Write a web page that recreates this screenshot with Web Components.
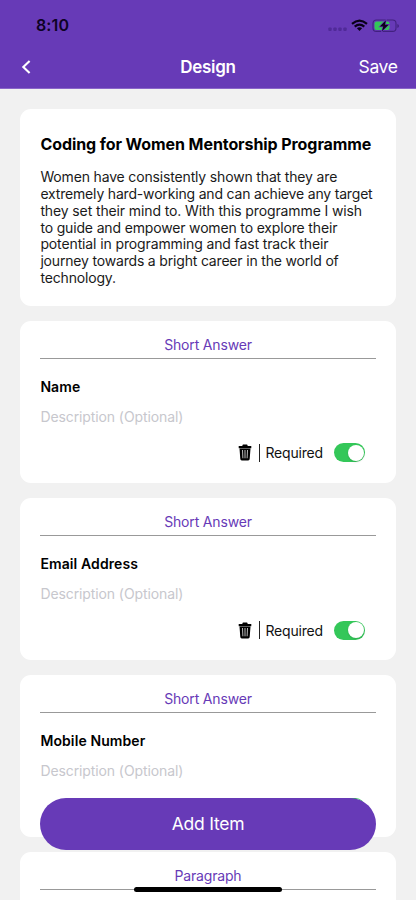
<!DOCTYPE html>
<html lang="en">
<head>
<meta charset="utf-8">
<title>Design</title>
<style>
  html, body { margin: 0; height: 900px; overflow: hidden; }
  body { background: #f1f1f1; font-family: Inter, "Liberation Sans", sans-serif; color: #000; }
</style>
</head>
<body>
<form-designer></form-designer>
<script>
const define = (name, html) => customElements.define(name, class extends HTMLElement {
  constructor() {
    super();
    this.attachShadow({ mode: 'open' }).innerHTML = html;
  }
});

define('status-bar', `
  <style>
    :host { display: flex; height: 44px; padding: 3px 17.5px 0 36px; box-sizing: border-box;
      align-items: center; justify-content: space-between; color: #0d0224; }
    .time { font-size: 16px; line-height: 20px; font-weight: 600; margin-top: 2px; letter-spacing: .1px; }
    svg { display: block; margin-top: 4px; }
  </style>
  <span class="time">8:10</span>
  <svg width="71" height="14" viewBox="0 0 71 14">
    <g fill="#502a98"><rect x="0.3" y="8.4" width="3.4" height="3.6" rx="1"/><rect x="5.3" y="8.4" width="3.4" height="3.6" rx="1"/><rect x="10.3" y="8.4" width="3.4" height="3.6" rx="1"/><rect x="15.3" y="8.4" width="3.4" height="3.6" rx="1"/></g>
    <g fill="none" stroke="#090118" stroke-width="2.2"><path d="M24 4.9Q31.5 -1.6 39 4.9"/><path d="M26.7 7.7Q31.5 3.7 36.3 7.7"/></g>
    <path d="M28.9 9.3Q31.5 7.3 34.1 9.3L31.5 12Z" fill="#090118"/>
    <rect x="45" y="1" width="23" height="11.4" rx="3.4" fill="none" stroke="#42217f" stroke-width="1.1"/>
    <path d="M69.4 5v4q1.5-.5 1.5-2t-1.5-2z" fill="#42217f"/>
    <rect x="46.5" y="2.4" width="15" height="8.6" rx="2" fill="#34c759"/>
    <path d="M57.9 1.2L51.8 7.5h3.5l-1.4 4.8L60.6 5.7H57z" fill="#090118" stroke="#673ab7" stroke-width="1.3" paint-order="stroke"/>
  </svg>`);

define('nav-bar', `
  <style>
    :host { display: grid; grid-template-columns: 1fr auto 1fr; align-items: center; height: 44px;
      padding: 1px 18.5px 0 20px; box-sizing: border-box; color: #fff; font-size: 17px; line-height: 22px; }
    .title { font-weight: 600; letter-spacing: -.3px; margin: 0 1.5px 0 0; }
    .action { justify-self: end; font-size: 17.5px; letter-spacing: -.4px; }
    svg { display: block; }
  </style>
  <svg width="13" height="16" viewBox="0 0 13 16"><path d="M9.6 1.9L3.3 8l6.3 6.1" fill="none" stroke="#fff" stroke-width="2.1"/></svg>
  <span class="title"><slot></slot></span>
  <span class="action"><slot name="action"></slot></span>`);

define('form-card', `
  <style>
    :host { display: block; box-sizing: border-box; background: #fff; border-radius: 11px; padding: 0 20px; flex: none; }
  </style>
  <slot></slot>`);

define('intro-text', `
  <style>
    :host { display: block; padding: 25px 0 19px; }
    h1 { margin: 0 0 15px; font-size: 16px; line-height: 20px; font-weight: 700; white-space: nowrap; letter-spacing: -.08px; }
    p { margin: 0; font-size: 14px; line-height: 16.85px; color: #1a1a1a; white-space: nowrap; letter-spacing: -.16px; }
    ::slotted(.open) { letter-spacing: -.12px; }
    ::slotted(.tight) { letter-spacing: -.18px; }
  </style>
  <h1><slot name="title"></slot></h1>
  <p><slot></slot></p>`);

define('trash-icon', `
  <style>:host, svg { display: block; }</style>
  <svg width="14" height="17" viewBox="0 0 14 17">
    <path d="M4.2 2L4.9.4H9.1L9.8 2H13.3V4.2H.7V2Z"/><path d="M1.5 4.5h11l-.8 10.5q-.1 1.4-1.5 1.4H3.8q-1.4 0-1.5-1.4z"/>
    <path d="M4.5 6l.4 8.3M7 6v8.3M9.5 6l-.4 8.3" stroke="#bbb" stroke-width="1" fill="none"/>
  </svg>`);

define('toggle-switch', `
  <style>
    :host { display: flex; box-sizing: border-box; width: 31.3px; height: 19px; padding: 1.2px; border-radius: 10px;
      background: #34c759; justify-content: flex-end; }
    i { width: 16.6px; height: 16.6px; border-radius: 50%; background: #fff; box-shadow: 0 1px 2px #0002; }
  </style><i></i>`);

define('question-item', `
  <style>
    :host { display: block; font-size: 14px; line-height: 17px; height: 162.2px; }
    .type { color: #673ab7; text-align: center; padding: 15px 0 5px; border-bottom: 1px solid #999; letter-spacing: -.17px; }
    .name { font-weight: 600; padding-top: 19px; letter-spacing: .1px; }
    .desc { color: #c7c7cd; padding-top: 13px; letter-spacing: -.1px; }
    .row { display: flex; align-items: center; justify-content: flex-end; padding: 18px 10.3px 0 0; height: 20px; }
  </style>
  <div class="type"><slot name="type"></slot></div>
  <div class="name"><slot></slot></div>
  <div class="desc"><slot name="desc"></slot></div>
  <div class="row"><slot name="controls"></slot></div>`);

define('required-control', `
  <style>
    :host { display: flex; align-items: center; color: #111; }
    .bar { width: 1px; height: 18px; background: #222; margin: 0 5px 0 7.5px; }
    .req { margin-right: 11px; letter-spacing: -.17px; }
  </style>
  <trash-icon></trash-icon><span class="bar"></span><span class="req">Required</span><toggle-switch></toggle-switch>`);

define('add-button', `
  <style>
    :host { display: flex; align-items: center; justify-content: center; position: absolute; left: 40.3px; top: 797.7px;
      width: 335.4px; height: 52px; border-radius: 26px; background: #673ab7; color: #fff; font-size: 17.5px; letter-spacing: -.22px; }
  </style>
  <span><slot></slot></span>`);

define('form-designer', `
  <style>
    :host { display: block; position: relative; height: 900px; overflow: hidden; }
    header { height: 89px; box-sizing: border-box; background: #673ab7; border-bottom: 1px solid #8a65c8; }
    main { display: flex; flex-direction: column; gap: 15px; padding: 20px 20.4px 0; }
    .home { position: absolute; left: 133.7px; top: 886.5px; width: 148.5px; height: 5.2px; border-radius: 3px; background: #000; }
  </style>
  <header><status-bar></status-bar><nav-bar>Design<span slot="action">Save</span></nav-bar></header>
  <main>
    <form-card><intro-text><span slot="title">Coding for Women Mentorship Programme</span>Women have consistently shown that they are<br><span class="tight">extremely hard-working and can achieve any target</span><br><span class="open">they set their mind to. With this programme I wish</span><br>to guide and empower women to explore their<br><span class="open">potential in programming and fast track their</span><br><span class="tight">journey towards a bright career in the world of</span><br>technology.</intro-text></form-card>
    <form-card><question-item><span slot="type">Short Answer</span>Name<span slot="desc">Description (Optional)</span><required-control slot="controls"></required-control></question-item></form-card>
    <form-card><question-item><span slot="type">Short Answer</span>Email Address<span slot="desc">Description (Optional)</span><required-control slot="controls"></required-control></question-item></form-card>
    <form-card><question-item><span slot="type">Short Answer</span>Mobile Number<span slot="desc">Description (Optional)</span><toggle-switch slot="controls"></toggle-switch></question-item></form-card>
    <form-card><question-item><span slot="type">Paragraph</span></question-item></form-card>
  </main>
  <add-button>Add Item</add-button>
  <div class="home"></div>`);
</script>
</body>
</html>
